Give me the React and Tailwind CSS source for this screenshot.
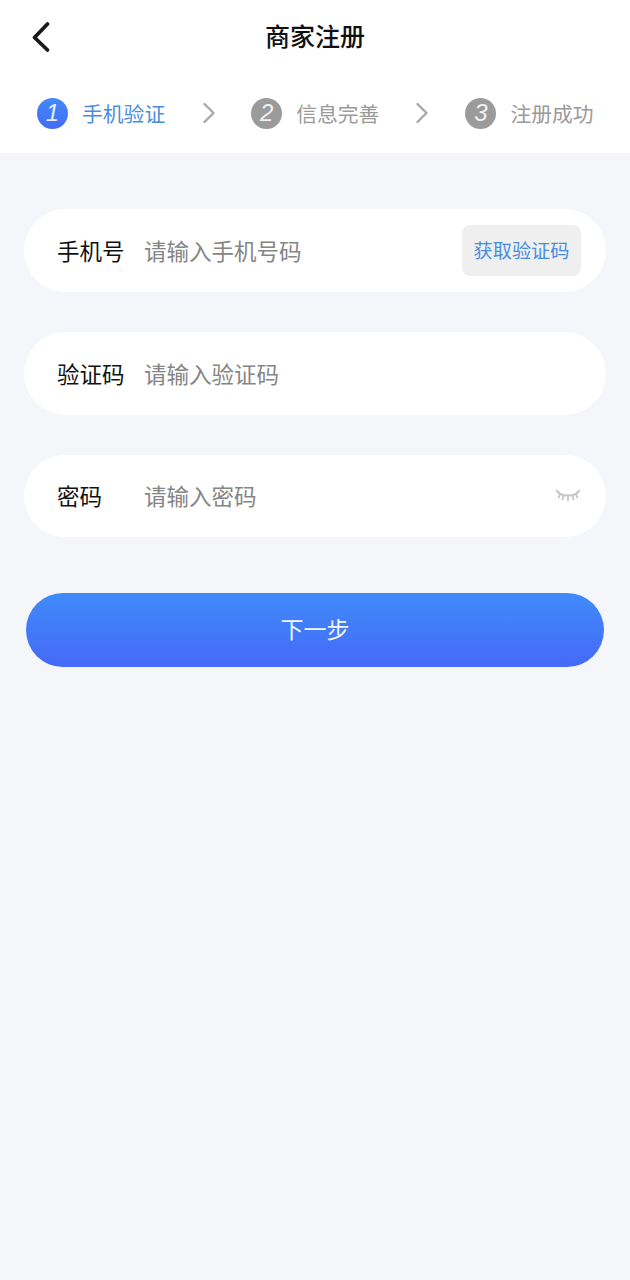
const F = { fontFamily: '"Noto Sans CJK SC", "Noto Sans", sans-serif' };

function Chevron() {
  return (
    <svg width="14" height="24" viewBox="0 0 14 24" fill="none" className="shrink-0">
      <path d="M2.5 3l9 9-9 9" stroke="#a8a8a8" strokeWidth="2.4" strokeLinecap="round" strokeLinejoin="round" />
    </svg>
  );
}

function Step({ n, label, active }) {
  return (
    <div className="flex items-center">
      <div className={"w-[31px] h-[31px] rounded-full flex items-center justify-center text-white/85 text-[24px] italic leading-none font-['Liberation_Sans'] " + (active ? "bg-gradient-to-b from-[#3f8bf8] to-[#4569f5]" : "bg-[#9b9b9b]")}>{n}</div>
      <span className={"ml-[14px] text-[20.8px] leading-[30px] " + (active ? "text-[#4a8ddc]" : "text-[#9a9a9a]")}>{label}</span>
    </div>
  );
}

function Row({ label, placeholder, children, className }) {
  return (
    <div className={"mx-[24px] bg-white rounded-[42px] flex items-center pl-[33px] pr-[25px] " + className}>
      <span className="w-[87px] text-[22.5px] text-[#111111] leading-[30px] pb-[2px]">{label}</span>
      <span className="flex-1 text-[22.5px] text-[#858585] leading-[30px] pb-[2px]">{placeholder}</span>
      {children}
    </div>
  );
}

export default function App() {
  return (
    <div style={F} className="w-[630px] h-[1280px] bg-[#f4f6fa] overflow-hidden flex flex-col">
      <div className="bg-white h-[153px] shrink-0">
        <div className="h-[76px] relative flex items-center justify-center">
          <svg width="20" height="32" viewBox="0 0 20 32" fill="none" className="absolute left-[31px] top-[21px]">
            <path d="M16.5 3L3.5 16.5 16.5 29" stroke="#1a1a1a" strokeWidth="3.8" strokeLinecap="round" strokeLinejoin="round" />
          </svg>
          <span className="text-[25px] font-medium text-[#111111] leading-[36px] pb-[6px]">商家注册</span>
        </div>
        <div className="flex items-center pl-[37px] h-[76px] pb-[2px]">
          <Step n="1" label="手机验证" active />
          <div className="ml-[37px]"><Chevron /></div>
          <div className="ml-[35px]"><Step n="2" label="信息完善" /></div>
          <div className="ml-[36px]"><Chevron /></div>
          <div className="ml-[36px]"><Step n="3" label="注册成功" /></div>
        </div>
      </div>
      <Row label="手机号" placeholder="请输入手机号码" className="mt-[56px] h-[83px]">
        <div className="w-[119px] h-[51px] rounded-[8px] bg-[#efefef] flex items-center justify-center text-[19.2px] text-[#4a8ddc]">获取验证码</div>
      </Row>
      <Row label="验证码" placeholder="请输入验证码" className="mt-[40px] h-[83px]" />
      <Row label="密码" placeholder="请输入密码" className="mt-[40px] h-[82px] pr-[24px]">
        <svg width="26" height="14" viewBox="0 0 26 14" fill="none" stroke="#c8c8c8" strokeWidth="1.9" strokeLinecap="round">
          <path d="M3 3.5C8 7.5 18 7.5 23 3.5" />
          <path d="M1.5 1.5L4.5 4M24.5 1.5L21.5 4M8.5 6.5L7.5 10.5M13 7.5V11.5M17.5 6.5L18.5 10.5M5 5.5L3.5 8.5M21 5.5L22.5 8.5" />
        </svg>
      </Row>
      <div className="mx-[26px] mt-[56px] h-[74px] rounded-[37px] bg-gradient-to-b from-[#3f8bf8] to-[#4569f8] flex items-center justify-center text-white/95 text-[23px] pb-[4px]">下一步</div>
    </div>
  );
}
